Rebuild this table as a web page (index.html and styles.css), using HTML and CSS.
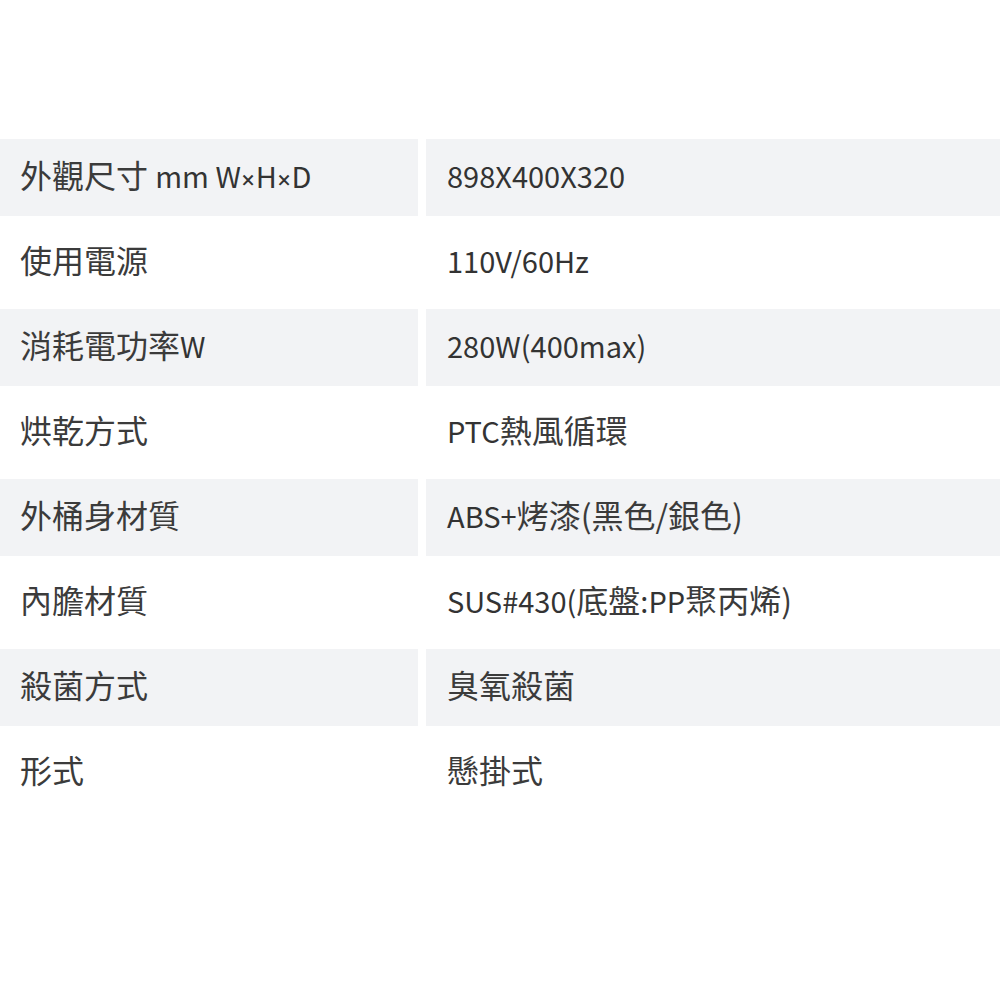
FILE: index.html
```html
<!DOCTYPE html>
<html lang="zh-Hant">
<head>
<meta charset="utf-8">
<link rel="stylesheet" href="styles.css">
</head>
<body>
<div class="spec">
  <div class="cell shade">外觀尺寸 <span class="en">mm W<span class="x">×</span>H<span class="x">×</span>D</span></div><div class="cell shade val"><span class="en">898X400X320</span></div>
  <div class="cell">使用電源</div><div class="cell val"><span class="en">110V/60Hz</span></div>
  <div class="cell shade">消耗電功率<span class="en">W</span></div><div class="cell shade val"><span class="en">280W(400max)</span></div>
  <div class="cell">烘乾方式</div><div class="cell val"><span class="en">PTC</span>熱風循環</div>
  <div class="cell shade">外桶身材質</div><div class="cell shade val"><span class="en">ABS+</span>烤漆(黑色/銀色)</div>
  <div class="cell">內膽材質</div><div class="cell val"><span class="en">SUS#430(</span>底盤<span class="en">:PP</span>聚丙烯)</div>
  <div class="cell shade">殺菌方式</div><div class="cell shade val">臭氧殺菌</div>
  <div class="cell">形式</div><div class="cell val">懸掛式</div>
</div>
</body>
</html>
```
FILE: styles.css
```css
html, body {
  margin: 0;
  padding: 0;
  background: #fff;
}
.spec {
  display: grid;
  grid-template-columns: 418px 1fr;
  grid-auto-rows: 77px;
  column-gap: 8px;
  row-gap: 8px;
  margin-top: 139px;
  font-family: "Noto Sans CJK TC", sans-serif;
  font-size: 32px;
  color: #3b3b3b;
}
.cell {
  display: block;
  line-height: 71px;
  padding: 0 0 6px 20px;
  white-space: nowrap;
}
.val {
  padding-left: 21px;
}
.shade {
  background: #f2f3f5;
}
.en {
  font-size: 29px;
  color: #333;
}
.x {
  font-family: "Roboto", sans-serif;
  font-size: 24px;
  margin: 0 1px;
}
```
